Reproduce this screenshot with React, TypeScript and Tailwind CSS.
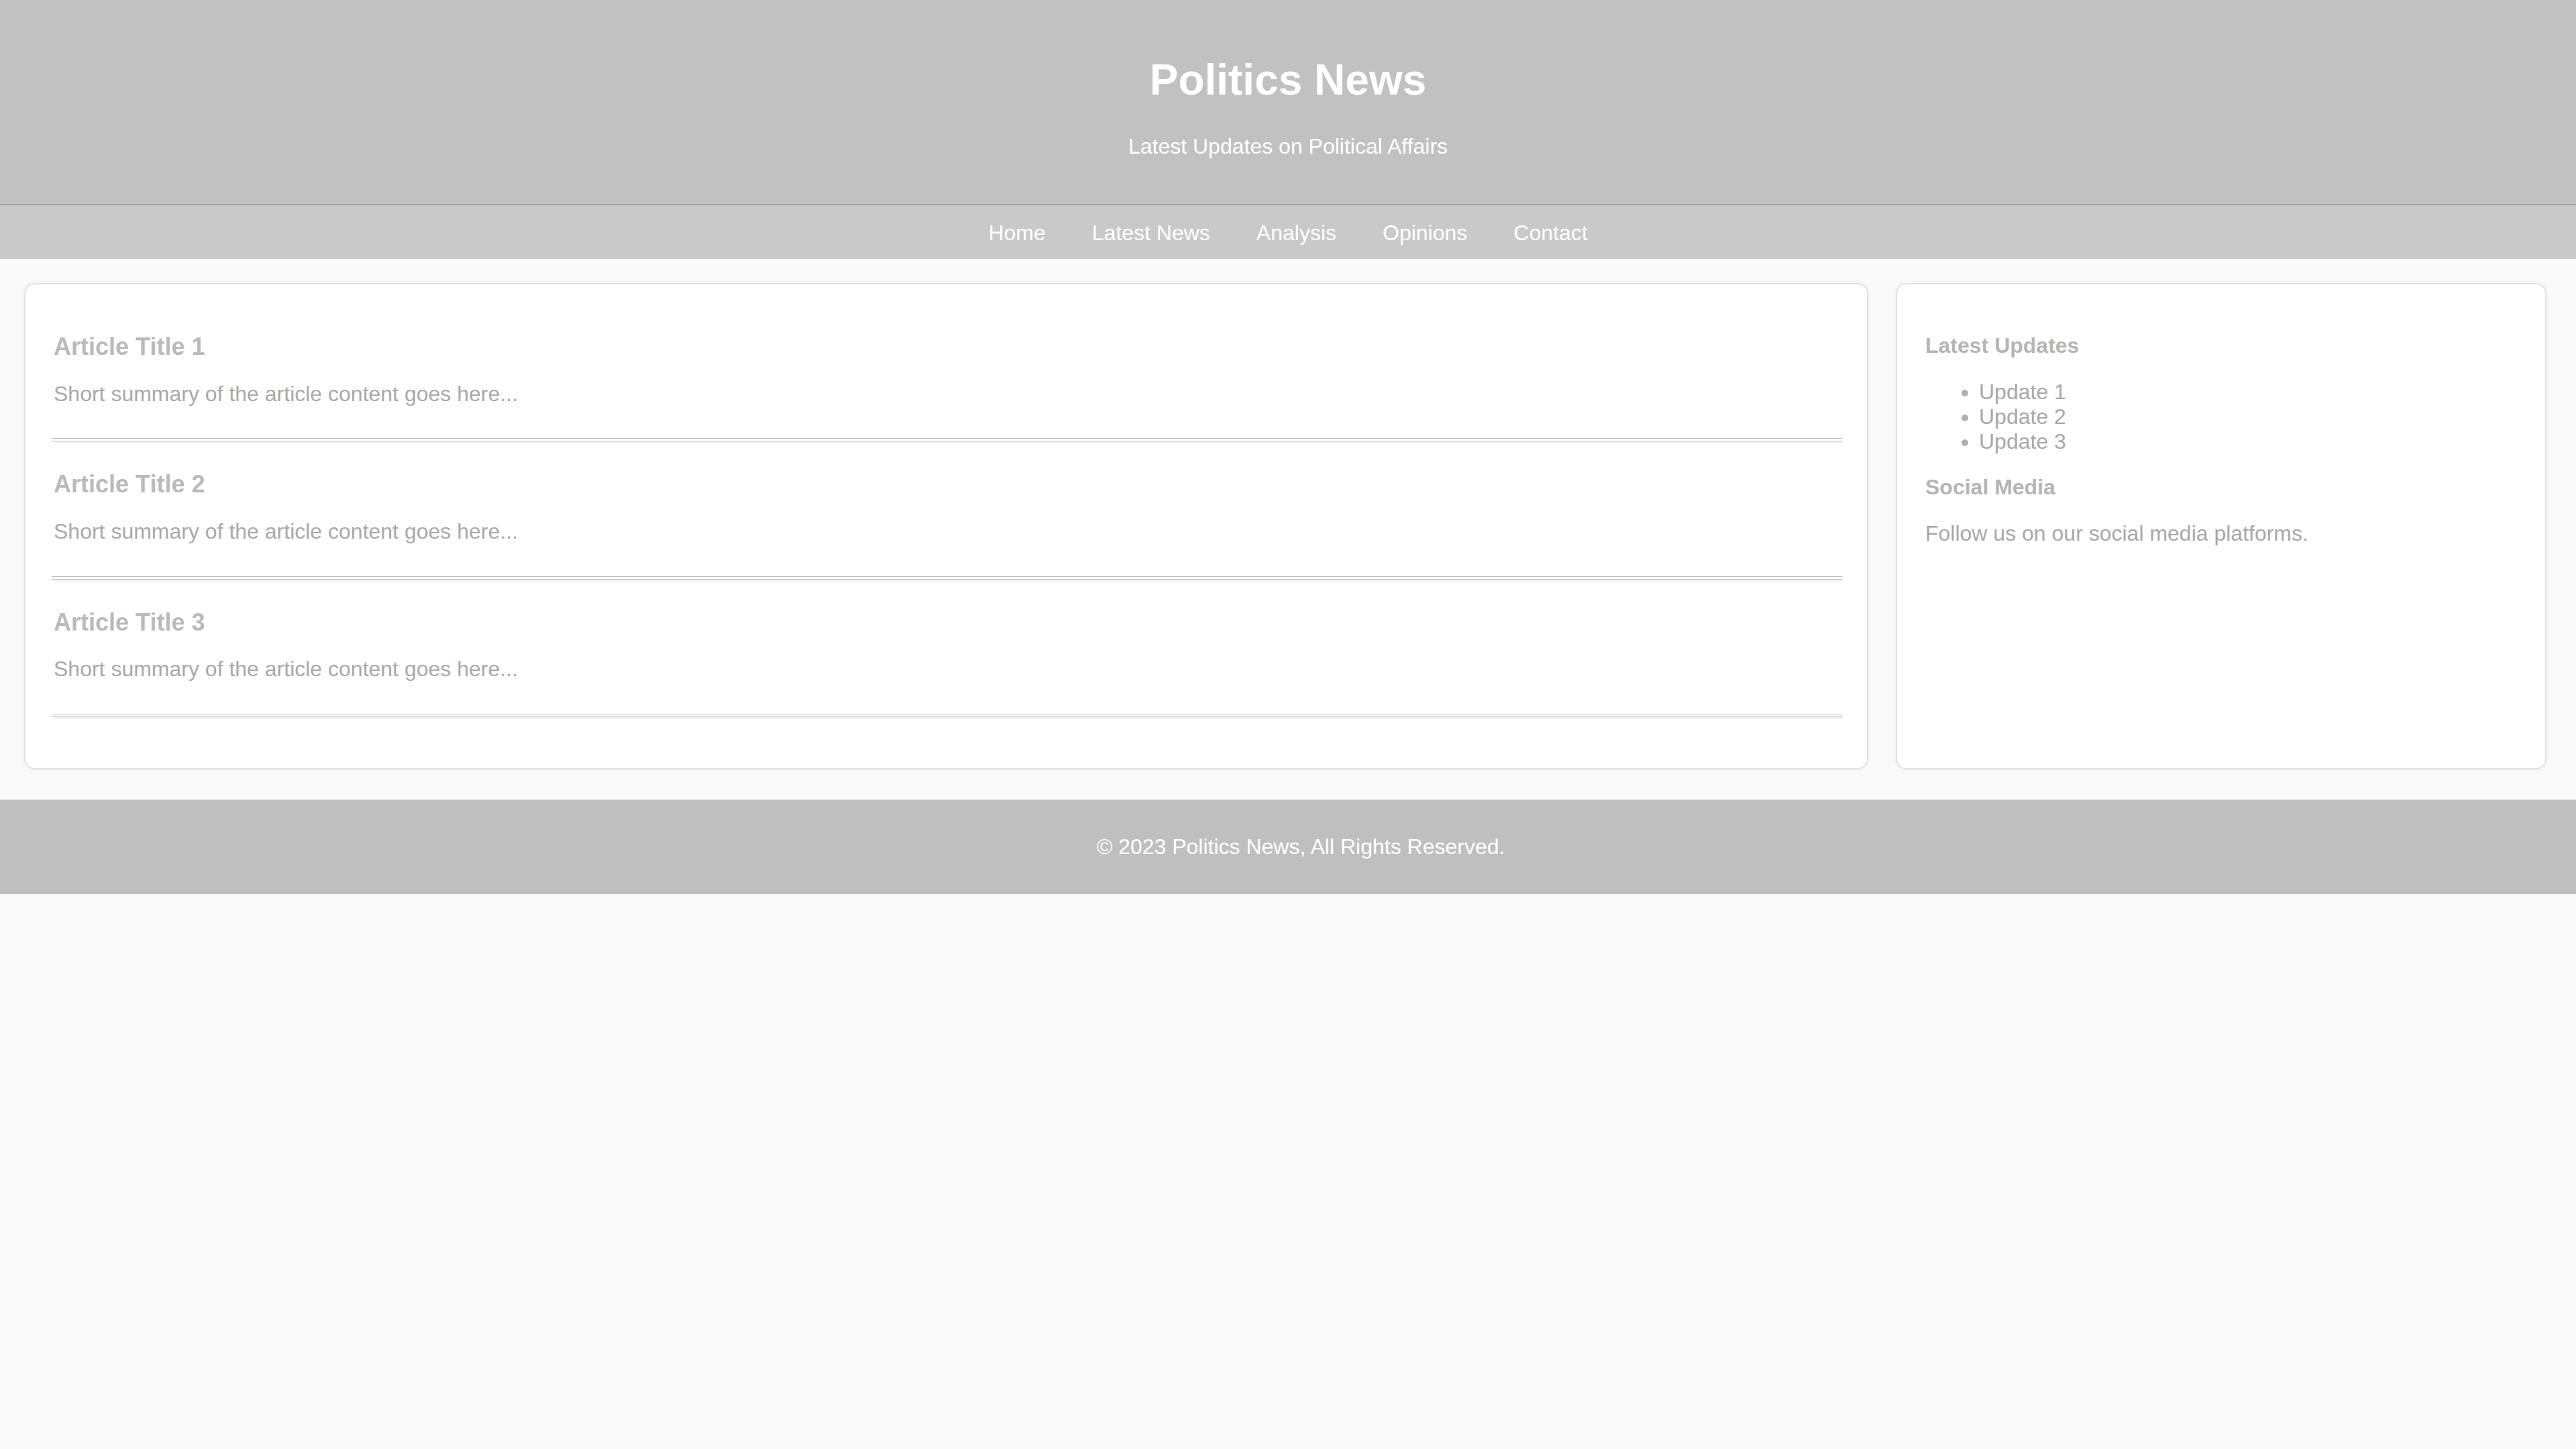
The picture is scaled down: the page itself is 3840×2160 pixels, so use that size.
const navLinks = ['Home', 'Latest News', 'Analysis', 'Opinions', 'Contact']
const articles = [1, 2, 3]
const updates = ['Update 1', 'Update 2', 'Update 3']

function Divider() {
  return (
    <div className="-mx-[4px] mt-[48px]">
      <div className="h-[5px] rounded-[2px] border-y border-[#bdbdbd] bg-white" />
      <div className="ml-[6px] h-[3px] bg-[#f1f1f1]" />
    </div>
  )
}

export default function App() {
  return (
    <div className="min-h-screen bg-[#fafafa] font-['Liberation_Sans',Arial,sans-serif]">
      <header className="border-b border-[#919191] bg-[#c1c1c1] pt-[83px] pb-[68px] text-center text-white">
        <h1 className="text-[64px] font-bold leading-[1.15]">Politics News</h1>
        <p className="mt-[43px] text-[32px] leading-[1.15]">Latest Updates on Political Affairs</p>
      </header>

      <nav className="flex justify-center gap-[69px] border-t-4 border-[#c4c4c4] bg-[#c9c9c9] py-[20px] text-[32px] leading-[1.15] text-white">
        {navLinks.map((link) => (
          <a key={link} href="#">{link}</a>
        ))}
      </nav>

      <main className="flex gap-[41px] pt-[36px] pr-[44px] pb-[45px] pl-[36px]">
        <section className="flex-1 rounded-[16px] border-2 border-[#e2e2e2] bg-white pt-[40px] pr-[40px] pb-[73px] pl-[42px] shadow-[0_0_8px_rgba(0,0,0,0.05)]">
          {articles.map((n) => (
            <article key={n} className={n === 1 ? 'mt-[32px]' : 'mt-[40px]'}>
              <h2 className="text-[36px] font-bold leading-[1.15] text-[#bababa]">Article Title {n}</h2>
              <p className="mt-[31px] text-[32px] leading-[1.15] text-[#a9a9a9]">
                Short summary of the article content goes here...
              </p>
              <Divider />
            </article>
          ))}
        </section>

        <aside className="w-[970px] shrink-0 rounded-[16px] border-2 border-[#e2e2e2] bg-white py-[40px] pr-[40px] pl-[42px] shadow-[0_0_8px_rgba(0,0,0,0.05)]">
          <h3 className="mt-[33px] text-[32px] font-bold leading-[1.15] text-[#b5b5b5]">Latest Updates</h3>
          <ul className="mt-[32px] list-disc pl-[80px] text-[32px] leading-[1.15] text-[#a8a8a8] marker:text-[#b0b0b0]">
            {updates.map((u) => (
              <li key={u}>{u}</li>
            ))}
          </ul>
          <h3 className="mt-[32px] text-[32px] font-bold leading-[1.15] text-[#b5b5b5]">Social Media</h3>
          <p className="mt-[32px] text-[32px] leading-[1.15] text-[#a8a8a8]">Follow us on our social media platforms.</p>
        </aside>
      </main>

      <footer className="bg-[#bfbfbf] py-[52px] pl-[38px] text-center text-[32px] leading-[1.15] text-white">
        © 2023 Politics News, All Rights Reserved.
      </footer>
    </div>
  )
}
